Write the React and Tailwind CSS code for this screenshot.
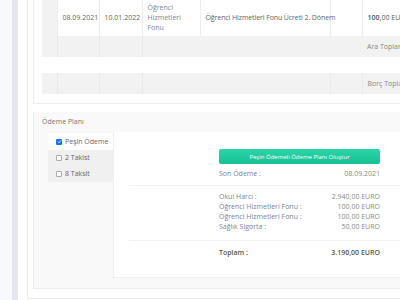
import React from 'react';

const font = { fontFamily: '"Open Sans", "Liberation Sans", sans-serif' };

const Check = ({ on }) =>
    on ? (
        <span className="w-[6px] h-[6px] rounded-[1px] bg-[#1a73e8] flex items-center justify-center">
            <svg width="5" height="5" viewBox="0 0 10 10">
                <path d="M2 5.2 L4.2 7.4 L8 2.8" stroke="#fff" strokeWidth="1.8" fill="none" />
            </svg>
        </span>
    ) : (
        <span className="w-[6px] h-[6px] rounded-[1px] border border-[#aaa] bg-white" />
    );

const DetailRow = ({ label, value, bold }) => (
    <div className={`flex justify-between h-[10px] items-center ${bold ? 'font-semibold text-[#555]' : 'text-[#7a8397]'}`}>
        <span>{label}</span>
        <span className={bold ? '' : 'text-[#888]'}>{value}</span>
    </div>
);

export default function App() {
    const cell = 'border-r border-[#ececec] align-middle px-[5px] whitespace-nowrap';
    const line = 'border-r border-[#e9e9e9]';
    return (
        <div className="w-[400px] h-[300px] overflow-hidden flex bg-[#f8f9fb] text-[7px] leading-[10px] text-[#777]" style={font}>
            <div className="w-[12px] shrink-0" />
            <div className="w-[6px] shrink-0 bg-[#e4e8ee]" />
            <div className="flex-1 bg-white pl-[9px] overflow-hidden">
                {/* outer page card */}
                <div className="w-[420px] border-l border-b border-[#ededed] pl-[5px] pb-[9px]">
                    {/* invoice table card */}
                    <div className="h-[104px] border-l border-b border-[#ededed] pl-[8px]">
                        <table className="w-[420px] border-collapse table-fixed">
                            <colgroup>
                                <col className="w-[15px]" />
                                <col className="w-[42px]" />
                                <col className="w-[43px]" />
                                <col className="w-[58px]" />
                                <col className="w-[130px]" />
                                <col className="w-[32px]" />
                                <col />
                            </colgroup>
                            <tbody>
                                <tr className="h-[36px] bg-white text-[#666]">
                                    <td className={`${cell} bg-[#f2f2f2]`} />
                                    <td className={cell}>08.09.2021</td>
                                    <td className={cell}>10.01.2022</td>
                                    <td className={`${cell} text-[#7a8397]`}>Öğrenci<br />Hizmetleri<br />Fonu</td>
                                    <td className={`${cell} text-[#666] tracking-[-0.1px]`}>Öğrenci Hizmetleri Fonu Ücreti 2. Dönem</td>
                                    <td className={cell} />
                                    <td className={`${cell} text-[#555]`}><span className="font-semibold">100,</span>00 EURO</td>
                                </tr>
                                <tr className="h-[21px] bg-[#f2f2f2]">
                                    <td className={line} />
                                    <td className={line} />
                                    <td className={line} />
                                    <td colSpan={3} />
                                    <td className="px-[5px] whitespace-nowrap text-[#888]">Ara Toplam</td>
                                </tr>
                                <tr className="h-[16px] bg-white">
                                    <td colSpan={7} />
                                </tr>
                                <tr className="h-[21px] bg-[#f2f2f2]">
                                    <td className={line} />
                                    <td className={line} />
                                    <td className={line} />
                                    <td className={line} colSpan={2} />
                                    <td className={line} />
                                    <td className="px-[5px] whitespace-nowrap text-[#888]">Borç Toplam</td>
                                </tr>
                            </tbody>
                        </table>
                    </div>

                    {/* payment plan card */}
                    <div className="mt-[8px] h-[177px] border-l border-b border-[#ededed] bg-[#f9f9f9] flex flex-col">
                        <div className="h-[20px] pl-[8px] flex items-center text-[#777]">Ödeme Planı</div>
                        <div className="flex pl-[14px]">
                            <div className="w-[65px] shrink-0 flex flex-col pt-[1px]">
                                <div className="h-[17px] bg-white flex items-center gap-[3px] pl-[8px] text-[#666] whitespace-nowrap">
                                    <Check on />
                                    <span>Peşin Ödeme</span>
                                </div>
                                <div className="h-[16px] bg-[#f0f0f0] flex items-center gap-[3px] pl-[8px] text-[#666]">
                                    <Check />
                                    <span>2 Takist</span>
                                </div>
                                <div className="h-[16px] bg-[#f0f0f0] flex items-center gap-[3px] pl-[8px] text-[#666]">
                                    <Check />
                                    <span>8 Taksit</span>
                                </div>
                            </div>
                            <div className="flex-1 h-[146px] bg-white border-l border-b border-[#efefef] pl-[15px]">
                                <div className="ml-[90px] w-[161px] pt-[17px]">
                                    <button className="w-full h-[15px] rounded-[2px] bg-gradient-to-b from-[#2ad5a8] to-[#16c093] text-white text-[6px] flex items-center justify-center">
                                        Peşin Ödemeli Ödeme Planı Oluştur
                                    </button>
                                    <div className="mt-[5px]">
                                        <DetailRow label="Son Ödeme :" value="08.09.2021" />
                                    </div>
                                </div>
                                <div className="mt-[6px] border-t border-[#f2f2f2]" />
                                <div className="ml-[90px] w-[161px] pt-[6px] flex flex-col">
                                    <DetailRow label="Okul Harcı :" value="2.940,00 EURO" />
                                    <DetailRow label="Öğrenci Hizmetleri Fonu :" value="100,00 EURO" />
                                    <DetailRow label="Öğrenci Hizmetleri Fonu :" value="100,00 EURO" />
                                    <DetailRow label="Sağlık Sigorta :" value="50,00 EURO" />
                                </div>
                                <div className="mt-[8px] border-t border-[#f2f2f2]" />
                                <div className="ml-[90px] w-[161px] pt-[7px]">
                                    <DetailRow label="Toplam :" value="3.190,00 EURO" bold />
                                </div>
                            </div>
                        </div>
                    </div>
                </div>
            </div>
        </div>
    );
}
